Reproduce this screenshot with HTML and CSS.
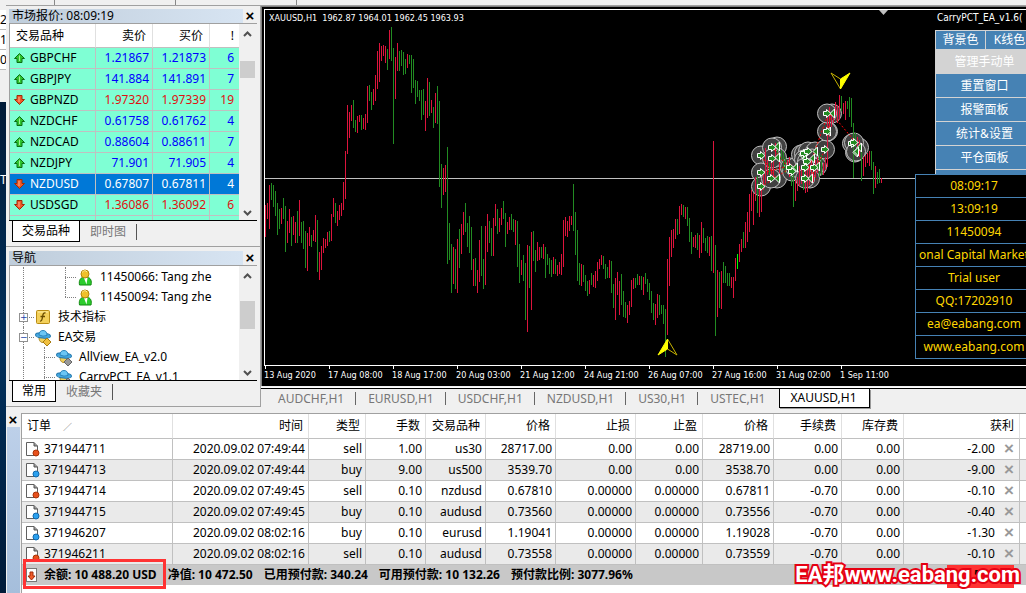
FILE: index.html
```html
<!DOCTYPE html>
<html lang="zh-CN">
<head>
<meta charset="utf-8">
<title>XAUUSD,H1</title>
<link rel="stylesheet" href="styles.css">
</head>
<body>
<svg class="defs" aria-hidden="true">
  <defs>
    <symbol id="up" viewBox="0 0 11 10"><path d="M5.5.5 10.5 5.5H8V9.5H3V5.5H.5Z" fill="#2fc52f" stroke="#0b6e12"/><path d="M5.5 2.5V8" stroke="#a4f09a"/></symbol>
    <symbol id="down" viewBox="0 0 11 10"><path d="M5.5 9.5 10.5 4.5H8V.5H3V4.5H.5Z" fill="#f05a28" stroke="#a02a08"/><path d="M5 2V7" stroke="#ffb090"/></symbol>
    <symbol id="doc" viewBox="0 0 15 16"><path d="M1.5 1.5H9L12.5 5V14.5H1.5Z" fill="#fff" stroke="#606060"/><path d="M9 1.5V5H12.5" fill="#999" stroke="#555"/></symbol>
    <symbol id="user" viewBox="0 0 17 17"><path d="M2.5 16C1.5 11 4 8.5 6 8.5H10.5C13.5 8.5 15 12 14 16Z" fill="#2ccc2c" stroke="#128a12"/><path d="M7 9 9.5 15.5 10.5 9Z" fill="#fff"/><circle cx="8" cy="5" r="4" fill="#f0c02c" stroke="#b5860c"/><path d="M5 3.5Q8 0 10 3" fill="none" stroke="#fff09a"/></symbol>
    <symbol id="func" viewBox="0 0 17 17"><rect x="1.5" y="1.5" width="13" height="13" rx="1" fill="#f3d05a" stroke="#b98c14"/><path d="M3 3H13" stroke="#fff0a8"/><path d="M10.5 4C8.5 3.500 8 5 7.5 8S6.5 12.5 5 12M5.5 7.5H10" fill="none" stroke="#6a4c00" stroke-width="1.3"/></symbol>
    <symbol id="hat" viewBox="0 0 17 17"><path d="M4 8H12C12 12 10.5 13.500 8 13.500S4 12 4 8Z" fill="#f3d05a" stroke="#a98420"/><ellipse cx="8" cy="6.5" rx="7.5" ry="2.6" fill="#45a8e0" stroke="#1f75ac" transform="rotate(6 8 6.5)"/><path d="M4 6C4 3 5.5 1.500 8 1.500S12 3 12 6.500Q8 8 4 6Z" fill="#6cc6f4" stroke="#2b86bd"/></symbol>
  </defs>
</svg>
<div class="desk">
  <aside class="edge"><div class="edge-rows"><span>2</span><span>1</span><span>0</span></div><div class="edge-dark">T</div></aside>
  <div class="app">
    <div class="toolbar"><i></i><i></i><i></i></div>
    <div class="workspace">
      <div class="dock">
        <section class="panel market">
          <header class="caption"><h2>市场报价: 08:09:19</h2><button class="close" aria-label="关闭">×</button></header>
          <div class="view">
            <table class="quotes">
              <colgroup><col class="q-sym"><col class="q-price"><col class="q-price"><col class="q-spread"></colgroup>
              <thead><tr><th>交易品种</th><th>卖价</th><th>买价</th><th>!</th></tr></thead>
              <tbody>
                <tr><td><svg><use href="#up"/></svg>GBPCHF</td><td>1.21867</td><td>1.21873</td><td>6</td></tr>
                <tr><td><svg><use href="#up"/></svg>GBPJPY</td><td>141.884</td><td>141.891</td><td>7</td></tr>
                <tr class="fall"><td><svg><use href="#down"/></svg>GBPNZD</td><td>1.97320</td><td>1.97339</td><td>19</td></tr>
                <tr><td><svg><use href="#up"/></svg>NZDCHF</td><td>0.61758</td><td>0.61762</td><td>4</td></tr>
                <tr><td><svg><use href="#up"/></svg>NZDCAD</td><td>0.88604</td><td>0.88611</td><td>7</td></tr>
                <tr><td><svg><use href="#up"/></svg>NZDJPY</td><td>71.901</td><td>71.905</td><td>4</td></tr>
                <tr class="selected"><td><svg><use href="#down"/></svg>NZDUSD</td><td>0.67807</td><td>0.67811</td><td>4</td></tr>
                <tr class="fall"><td><svg><use href="#down"/></svg>USDSGD</td><td>1.36086</td><td>1.36092</td><td>6</td></tr>
                <tr><td></td><td></td><td></td><td></td></tr>
              </tbody>
            </table>
            <div class="scroll"><svg viewBox="0 0 9 6"><path d="M1 5 4.5 1.5 8 5"/></svg><i class="thumb"></i><svg viewBox="0 0 9 6"><path d="M1 1 4.5 4.5 8 1"/></svg></div>
          </div>
          <nav class="tabs"><button class="active">交易品种</button><button>即时图</button></nav>
        </section>
        <section class="panel navigator">
          <header class="caption"><h2>导航</h2><button class="close" aria-label="关闭">×</button></header>
          <div class="view">
            <ul class="tree">
              <li><i class="v"></i><i></i><i class="v h"></i><svg><use href="#user"/></svg>11450066: Tang zhe</li>
              <li><i class="v"></i><i></i><i class="v h end"></i><svg><use href="#user"/></svg>11450094: Tang zhe</li>
              <li><i class="v h"><b>+</b></i><svg><use href="#func"/></svg>技术指标</li>
              <li><i class="v h"><b>−</b></i><svg><use href="#hat"/><path d="M12 9 16 13 12 17 8 13Z" fill="#f0c040" stroke="#a87c10"/></svg>EA交易</li>
              <li><i class="v"></i><i class="v h"></i><svg><use href="#hat"/><path d="M12 9 16 13 12 17 8 13Z" fill="#999" stroke="#666"/></svg>AllView_EA_v2.0</li>
              <li><i class="v"></i><i class="v h"></i><svg><use href="#hat"/><path d="M12 9 16 13 12 17 8 13Z" fill="#999" stroke="#666"/></svg>CarryPCT_EA_v1.1</li>
            </ul>
            <div class="scroll"><svg viewBox="0 0 9 6"><path d="M1 5 4.5 1.5 8 5"/></svg><i class="thumb"></i><svg viewBox="0 0 9 6"><path d="M1 1 4.5 4.5 8 1"/></svg></div>
          </div>
          <nav class="tabs"><button class="active">常用</button><button>收藏夹</button></nav>
        </section>
      </div>
      <main class="charts">
        <div class="chart">
          <div class="plot">
            <svg id="plot" class="canvas" role="img" aria-label="XAUUSD H1"></svg>
            <p class="ohlc">XAUUSD,H1&nbsp; 1962.87 1964.01 1962.45 1963.93</p>
            <div class="overlay">
              <p class="ea-name">CarryPCT_EA_v1.6(</p>
              <div class="buttons">
                <button>背景色</button><button>K线色</button>
                <button class="wide off">管理手动单</button>
                <button class="wide">重置窗口</button>
                <button class="wide">报警面板</button>
                <button class="wide">统计&amp;设置</button>
                <button class="wide">平仓面板</button>
                <span class="wide"></span>
              </div>
              <ul class="status"><li>08:09:17</li><li>13:09:19</li><li>11450094</li><li>onal Capital Market</li><li>Trial user</li><li>QQ:17202910</li><li>ea@eabang.com</li><li>www.eabang.com</li></ul>
            </div>
          </div>
          <ol class="axis"><li>13 Aug 2020</li><li>17 Aug 08:00</li><li>18 Aug 17:00</li><li>20 Aug 03:00</li><li>21 Aug 12:00</li><li>24 Aug 21:00</li><li>26 Aug 07:00</li><li>27 Aug 16:00</li><li>31 Aug 02:00</li><li>1 Sep 11:00</li></ol>
        </div>
        <nav class="chart-tabs"><button>AUDCHF,H1</button><button>EURUSD,H1</button><button>USDCHF,H1</button><button>NZDUSD,H1</button><button>US30,H1</button><button>USTEC,H1</button><button class="active">XAUUSD,H1</button></nav>
      </main>
    </div>
    <section class="terminal">
      <div class="grip"><button class="close" aria-label="关闭">×</button><div></div></div>
      <div class="orders-wrap">
        <table class="orders">
          <colgroup><col class="c-order"><col class="c-time"><col class="c-type"><col class="c-lots"><col class="c-sym"><col class="c-price"><col class="c-sl"><col class="c-tp"><col class="c-now"><col class="c-fee"><col class="c-swap"><col class="c-profit"><col></colgroup>
          <thead><tr><th>订单<span class="sort">∕</span></th><th>时间</th><th>类型</th><th>手数</th><th>交易品种</th><th>价格</th><th>止损</th><th>止盈</th><th>价格</th><th>手续费</th><th>库存费</th><th>获利</th><th></th></tr></thead>
          <tbody>
            <tr><td><svg><use href="#doc"/><circle class="sell" cx="11" cy="12" r="3"/></svg>371944711</td><td>2020.09.02 07:49:44</td><td>sell</td><td>1.00</td><td>us30</td><td>28717.00</td><td>0.00</td><td>0.00</td><td>28719.00</td><td>0.00</td><td>0.00</td><td>-2.00<button class="x" aria-label="平仓">×</button></td><td></td></tr>
            <tr><td><svg><use href="#doc"/><circle class="buy" cx="11" cy="12" r="3"/></svg>371944713</td><td>2020.09.02 07:49:44</td><td>buy</td><td>9.00</td><td>us500</td><td>3539.70</td><td>0.00</td><td>0.00</td><td>3538.70</td><td>0.00</td><td>0.00</td><td>-9.00<button class="x" aria-label="平仓">×</button></td><td></td></tr>
            <tr><td><svg><use href="#doc"/><circle class="sell" cx="11" cy="12" r="3"/></svg>371944714</td><td>2020.09.02 07:49:45</td><td>sell</td><td>0.10</td><td>nzdusd</td><td>0.67810</td><td>0.00000</td><td>0.00000</td><td>0.67811</td><td>-0.70</td><td>0.00</td><td>-0.10<button class="x" aria-label="平仓">×</button></td><td></td></tr>
            <tr><td><svg><use href="#doc"/><circle class="buy" cx="11" cy="12" r="3"/></svg>371944715</td><td>2020.09.02 07:49:45</td><td>buy</td><td>0.10</td><td>audusd</td><td>0.73560</td><td>0.00000</td><td>0.00000</td><td>0.73556</td><td>-0.70</td><td>0.00</td><td>-0.40<button class="x" aria-label="平仓">×</button></td><td></td></tr>
            <tr><td><svg><use href="#doc"/><circle class="buy" cx="11" cy="12" r="3"/></svg>371946207</td><td>2020.09.02 08:02:16</td><td>buy</td><td>0.10</td><td>eurusd</td><td>1.19041</td><td>0.00000</td><td>0.00000</td><td>1.19028</td><td>-0.70</td><td>0.00</td><td>-1.30<button class="x" aria-label="平仓">×</button></td><td></td></tr>
            <tr><td><svg><use href="#doc"/><circle class="sell" cx="11" cy="12" r="3"/></svg>371946211</td><td>2020.09.02 08:02:16</td><td>sell</td><td>0.10</td><td>audusd</td><td>0.73558</td><td>0.00000</td><td>0.00000</td><td>0.73559</td><td>-0.70</td><td>0.00</td><td>-0.10<button class="x" aria-label="平仓">×</button></td><td></td></tr>
          </tbody>
        </table>
        <div class="summary">
          <svg viewBox="0 0 12 15"><rect x=".5" y=".5" width="10" height="13" fill="#fff" stroke="#777"/><path d="M5.5 12 9 8H7V4H4V8H2Z" fill="#f05a28" stroke="#a02a08"/></svg>
          <span>余额: 10 488.20 USD</span><span>净值: 10 472.50</span><span>已用预付款: 340.24</span><span>可用预付款: 10 132.26</span><span>预付款比例: 3077.96%</span>
          <i class="mark"></i>
          <div class="total">5</div>
          <div class="watermark">EA邦www.eabang.com</div>
        </div>
      </div>
    </section>
  </div>
</div>
<script src="chart.js"></script>
</body>
</html>
```
FILE: styles.css
```css
* { box-sizing: border-box; }
body {
  margin: 0;
  background: #f0f0f0;
  color: #000;
  font: 12px/20px "Noto Sans", "Noto Sans CJK SC", sans-serif;
  overflow: hidden;
}
h2, p, ul, ol { margin: 0; padding: 0; }
ul, ol { list-style: none; }
button { margin: 0; padding: 0; border: 0; background: none; color: inherit; font: inherit; white-space: nowrap; }
table { border-collapse: separate; border-spacing: 0; table-layout: fixed; }
th { font-weight: normal; }
.defs { position: absolute; width: 0; height: 0; }

.desk { display: flex; min-height: 100vh; }
.edge { width: 6px; flex: none; display: flex; flex-direction: column; overflow: hidden; }
.edge-rows { height: 102px; padding-top: 10px; background: #f0f0f0; }
.edge-rows span { display: block; height: 20px; background: #fff; border-bottom: 1px solid #bbb; }
.edge-dark { flex: 1; padding-top: 68px; background: linear-gradient(#001a38, #00305c 50%, #001a38); color: #fff; }
.app { flex: 1; min-width: 0; display: flex; flex-direction: column; }

.toolbar { height: 6px; padding-left: 48px; display: flex; gap: 120px; border-bottom: 1px solid #a0a0a0; }
.toolbar i { width: 1px; background: #888; }
.workspace { display: flex; }
.dock { width: 255px; flex: none; }
.panel { padding: 2px 3px 3px; border-right: 1px solid #a0a0a0; border-bottom: 1px solid #a0a0a0; }
.caption { display: flex; align-items: center; height: 15px; }
.caption h2 { flex: 1; padding-left: 3px; background: linear-gradient(90deg, #bfcddb, #d7e4f2); font-size: 12px; font-weight: normal; line-height: 14px; }
.close { width: 14px; font: bold 15px/14px "Liberation Sans", sans-serif; }
.view { display: flex; border: 1px solid #a0a0a0; border-width: 1px 0 0 1px; background: #fff; overflow: hidden; }
.market .view { height: 197px; }
.navigator { padding-top: 3px; }
.navigator .view { height: 115px; }

.quotes { flex: 1; width: 229px; }
.q-sym { width: 86px; }
.q-price { width: 57px; }
.quotes th { height: 24px; padding: 0 6px; border-right: 1px solid #e0e0e0; border-bottom: 1px solid #c0c0c0; text-align: right; line-height: 22px; }
.quotes th:first-child { text-align: left; }
.quotes td { height: 21px; padding: 0 3px; border-right: 1px solid #c0c0c0; border-bottom: 1px solid #c0c0c0; background: #7fffd4; color: #00f; text-align: right; line-height: 20px; }
.quotes td:first-child { padding-left: 4px; color: #000; text-align: left; }
.quotes td:last-child, .quotes th:last-child { border-right: 0; padding-right: 5px; }
.quotes .fall td:not(:first-child) { color: #e01010; }
.quotes .selected td, .quotes .selected td:first-child { background: #0078d7; color: #fff; }
.quotes svg { width: 11px; height: 10px; margin-right: 5px; vertical-align: -1px; }

.scroll { width: 18px; margin-left: auto; padding: 7px 2px 4px 0; display: flex; flex-direction: column; align-items: center; background: #f0f0f0; }
.scroll svg { width: 9px; height: 6px; fill: none; stroke: #505050; stroke-width: 2; }
.thumb { width: 15px; height: 17px; margin: 24px 0 auto; background: #cdcdcd; }
.navigator .thumb { height: 28px; margin-top: 22px; }

.tabs { display: flex; padding-left: 3px; border-top: 1px solid #000; }
.tabs button { height: 21px; margin: 0 0 1px; padding: 0 10px; color: #777; line-height: 20px; }
.tabs .active { border: solid #000; border-width: 0 1px 1px; background: #fff; color: #000; padding: 0 9px; }
.tabs button:last-child { height: 16px; margin-top: 3px; line-height: 14px; border-right: 1px solid #555; }

.tree { flex: 1; padding-top: 1px; white-space: nowrap; }
.tree li { display: flex; align-items: center; height: 20px; }
.tree i { position: relative; width: 21px; height: 20px; flex: none; }
.tree .v::before { content: ""; position: absolute; left: 13px; top: 0; bottom: 0; border-left: 1px dotted #808080; }
.tree .end::before { bottom: 10px; }
.tree .h::after { content: ""; position: absolute; left: 13px; top: 10px; width: 11px; border-top: 1px dotted #808080; }
.tree b { position: absolute; z-index: 1; left: 9px; top: 6px; width: 9px; height: 9px; border: 1px solid #919191; background: #fff; color: #1c3fa8; font: 9px/7px "DejaVu Sans", sans-serif; text-align: center; }
.tree svg { width: 17px; height: 17px; margin: 0 6px 0 4px; flex: none; }

.charts { flex: 1; min-width: 0; display: flex; flex-direction: column; }
.chart { background: #000; border-top: 1px solid #808080; border-left: 1px solid #808080; color: #fff; font: 9px/12px "DejaVu Sans Condensed", "DejaVu Sans", sans-serif; overflow: hidden; }
.plot { position: relative; height: 357px; margin: 2px 0 0 2px; border: solid #fff; border-width: 1px 0 1px 1px; }
.canvas { display: block; width: 100%; height: 100%; }
.ohlc { position: absolute; left: 4px; top: 2px; white-space: nowrap; }
.overlay { position: absolute; top: 2px; right: -7px; width: 118px; }
.ea-name { padding-left: 22px; font-size: 10px; }
.buttons { display: grid; grid-template-columns: 49px 1fr; gap: 1px; margin: 6px 0 0 20px; padding: 1px 0 0 1px; background: #d3d3d3; color: #fff; font: 12px/18px "Noto Sans", "Noto Sans CJK SC", sans-serif; }
.buttons button, .buttons span { height: 18px; background: #4682b4; }
.buttons .wide { grid-column: 1 / 3; height: 23px; line-height: 23px; }
.buttons .off { background: #d3d3d3; }
.buttons span.wide { height: 4px; }
.status { position: relative; border: 1px solid #4682b4; border-bottom: 0; background: #000; color: #ffd700; font: 12px/22px "Noto Sans", sans-serif; text-align: center; }
.status li { height: 23px; border-bottom: 1px solid #4682b4; white-space: nowrap; overflow: hidden; }
.axis { display: flex; height: 20px; padding-left: 2px; }
.axis li { position: relative; width: 64px; flex: none; padding-top: 3px; white-space: nowrap; }
.axis li::before { content: ""; position: absolute; left: 1px; top: 0; height: 3px; border-left: 1px solid #fff; }
.chart-tabs { flex: 1; display: flex; margin-top: 2px; padding-left: 7px; border-top: 1px solid #000; box-shadow: 0 -1px #fff; background: #f0f0f0; color: #777; }
.chart-tabs button { position: relative; height: 19px; padding: 0 14px 0 10px; line-height: 18px; }
.chart-tabs button:not(.active)::after { content: ""; position: absolute; right: 2px; top: 3px; height: 13px; border-right: 1px solid #666; }
.chart-tabs button:nth-child(6)::after { display: none; }
.chart-tabs .active { padding: 0 12px 0 10px; border: solid #000; border-width: 0 1px 1px; box-shadow: 1px 1px #999; background: #fff; color: #000; }

.canvas .bar { fill: #dc143c; }
.canvas .bar.g { fill: #228b22; }
.canvas .bar.l { fill: #00ff00; }
.canvas .level { fill: #c0c0c0; }
.canvas .deal circle { fill: #404040; stroke: #c0c0c0; }
.canvas .arrow { fill: #228b22; stroke: #fff; }
.canvas .route { fill: none; stroke: #f00; stroke-dasharray: 2 2; }
.canvas .fill { fill: #ff0; stroke: #ff0; }
.canvas .hollow { fill: #000; stroke: #c8b400; }

.terminal { flex: 1; display: flex; padding-top: 5px; }
.grip { width: 15px; flex: none; display: flex; flex-direction: column; }
.grip div { flex: 1; margin: 0 1px; background: linear-gradient(#bdd0e9, #a5bedb); }
.orders-wrap { flex: 1; min-width: 0; background: #fff; border-top: 1px solid #a0a0a0; border-left: 1px solid #a0a0a0; }
.orders { width: 100%; }
.c-order { width: 151px; }
.c-time { width: 136px; }
.c-type { width: 57px; }
.c-lots, .c-sym { width: 60px; }
.c-price { width: 70px; }
.c-sl { width: 80px; }
.c-tp { width: 67px; }
.c-now { width: 71px; }
.c-fee { width: 68px; }
.c-swap { width: 62px; }
.c-profit { width: 116px; }
.orders th { height: 25px; padding: 0 5px; border-right: 1px solid #e0e0e0; border-bottom: 1px solid #c0c0c0; text-align: right; white-space: nowrap; }
.orders th:first-child { text-align: left; }
.sort { margin-left: 12px; font-size: 9px; color: #777; }
.orders td { height: 21px; padding: 0 3px 0 0; border-right: 1px solid #c0c0c0; border-bottom: 1px solid #c0c0c0; text-align: right; line-height: 20px; white-space: nowrap; }
.orders tr > :last-child { border-right: 0; padding: 0; }
.orders td:first-child { padding-left: 3px; text-align: left; }
.orders tr:nth-child(even) td { background: #eaeaea; }
.orders svg { width: 15px; height: 16px; margin-right: 4px; vertical-align: -4px; }
.sell { fill: #e8501c; stroke: #a83408; }
.buy { fill: #2ba0ee; stroke: #1068ac; }
.x { width: 12px; height: 20px; margin: 0 1px 0 8px; color: #999; font: bold 17px/20px "Liberation Sans", sans-serif; vertical-align: top; }
.summary { position: relative; display: flex; align-items: center; gap: 11px; height: 20px; padding-left: 4px; background: #c8c8c8; font-weight: bold; white-space: nowrap; }
.summary > svg { width: 12px; height: 15px; margin-right: -5px; }
.mark { position: absolute; left: 1px; top: -6px; width: 143px; height: 30px; border: 3px solid #ff3333; }
.total { position: absolute; right: 12px; top: 0; width: 67px; height: 23px; padding-left: 27px; background: #ff3333; }
.watermark { position: absolute; right: 6px; top: -5px; color: #fff; font: bold 22px/30px "Liberation Sans Narrow", "Roboto", "Noto Sans CJK SC", sans-serif; -webkit-text-stroke: 4px #e60012; paint-order: stroke fill; }
```
FILE: chart.js
```js
// Bars run at a 2px pitch. Each block holds high-low pairs in thirds of a pixel,
// measured from the block's own base; r = up, g = down, l = highlighted.
const blocks = [
  { start: 0, base: 0, bars: `r615-710 r610-656 r555-686 g549-600 g555-620 g573-648 g609-704 g627-686 r624-672 g594-656
    g618-755 r663-728 r627-698 g651-737 r648-705 r666-728 g633-728 r600-708 g666-728 g663-747 g693-804 r699-812 r681-738
    g705-740 r690-722 r645-725 g660-815 r756-840 r738-810 r714-758 r717-743 r696-737 g693-725 r642-722 r594-651 g609-669
    r633-678 r615-660 r609-648 r546-630 r453-597 r315-462 r336-414 r315-363 g300-384 g360-396 r348-399 r345-366 g345-390
    r354-387 r342-390 r258-369 g255-303 g276-330 r267-315 r225-303 r153-267 r129-246 r138-183 r135-168 r138-189 g147-210
    r90-177 g81-183 g144-432 r171-297 r129-213 g153-213 g150-198 g156-225 g177-222 r162-204 g165-192 g165-279 g177-264
    g240-312 g243-291 g270-303 g270-360 g267-345 r303-393 r234-354 g246-348 r300-339 g321-384 r279-369 g258-372 g303-561
    g492-624 r504-585 r495-576 g441-791 g669-780 g732-879 r741-852 g747-867 r717-879 g687-804 r672-762 r636-705 g609-696
    g669-741 g648-759 g681-810 r777-858 g774-858 r810-879 r720-846 g678-828 g777-867 r678-855 r642-756 g663-729 g684-768
    r654-768 r612-678 g627-702 r654-696 r624-675 g603-657 g639-741 r666-702 r651-690 g642-690 g657-696 r660-735 g663-801` },
  { start: 127, base: 180, bars: `g552-669 r600-645 g585-663 g609-780 r555-815 g558-684 r516-750 g513-603 g570-636 r546-603
    r561-600 g561-594 r552-597 g561-654 g582-615 g594-642 g600-651 r591-642 g597-642 r615-648 r606-642 r582-645 r480-621
    r471-528 r483-531 r468-513 r468-495 g372-513 g456-585 g510-663 g609-675 r612-678 g615-666 g645-693 g663-708 r660-702
    g639-675 r645-681 r633-684 r606-663 r597-627 r585-615 g588-627 g612-657 g621-654 r600-654 g603-699 g672-745 r654-780
    r636-705 r663-765 g642-735 g693-770 g725-775 r735-790 r722-765 r660-740 r654-687 g654-684 g642-675 r648-675 g648-690
    r651-705 g639-672 g657-696 g669-720 g693-759 g729-780 r732-795 r702-774 g705-765 g735-762 g735-792 g747-891 r597-825
    r531-678 r510-591 r507-564 r477-537 g477-525 r438-522 r432-465 g435-471 r441-477 g441-498 g474-546 g516-582 r531-561
    r525-564 g519-570 r525-594 r486-579 g504-549 g534-573 g528-579 r531-588 g528-633 r243-639 g555-828 r630-771 g636-744
    r633-747 g606-669 g618-669 g639-678 g639-678 r651-684 r651-714 r594-663 l582-627 r552-606 r537-576 g516-564 r486-564
    r456-546 r402-516 r390-453 r399-495 r351-423 g348-459 r387-471 r390-456 r335-390 r265-370 r300-345 g310-345 r300-350
    r290-360 r250-300 g245-300 r280-340 g270-300 g275-330 g290-340 r300-330 r290-350 g330-378 g330-440 r360-423 r350-393
    r318-378 r320-372 g310-390 r330-400 r330-395 r320-375 r300-370 r310-365 r300-350 r290-340 g280-350 g285-345 r310-345
    r292-330 r150-320 r140-230 r160-200 r150-190 r126-165 r135-190 r105-180 g108-153 r129-163 r123-180 g123-146 g111-170
    g114-200 g188-354 g220-260 r230-275 r240-290 g270-362 r290-348 r285-320 r279-310 r273-318 g273-330 g306-402 r318-384
    g336-372 g326-370 r354-369` }
];

// Deal markers: centre x, centre y, and 1 for an entry or 0 for an exit.
const deals = [[496,146,1],[496,163,1],[496,177,1],[512,169,0],[506,169,1],[512,137,0],[507,138,1],[512,148,0],[507,149,1],
  [525,158,1],[527,162,1],[530,158,0],[536,145,0],[539,144,1],[543,142,1],[550,142,0],[539,150,0],[542,152,1],[547,149,0],
  [552,157,0],[549,158,1],[540,158,1],[545,169,0],[540,169,1],[560,140,1],[563,122,0],[562,122,1],[567,104,0],[562,104,1],
  [590,143,0],[587,134,1],[594,138,0],[589,133,1],[591,142,0]];

const plotTop = 10;
let out = '<rect class="level" x="0" y="168" width="100%" height="1"/>';
out += '<g class="deal">' + deals.map(([x, y]) => `<circle cx="${x}" cy="${y - 0.5}" r="9.5"/>`).join('') + '</g>';
for (const { start, base, bars } of blocks) {
  bars.trim().split(/\s+/).forEach((bar, i) => {
    const [hi, lo] = bar.slice(1).split('-').map(v => Math.round((+v + base) / 3));
    out += `<rect class="bar ${bar[0]}" x="${(start + i) * 2}" y="${hi - plotTop}" width="1" height="${lo - hi}"/>`;
  });
}
out += '<path class="route" d="M496 146 512 169M498 163 527 155M507 137 527 162M538 145 552 170M543 160 563 104M563 122 566 103 592 134M560 140 545 169M496 177 530 155"/>';
for (const [x, y, entry] of deals) {
  const cy = y - 0.5;
  out += entry
    ? `<path class="arrow" d="M${x - 3.5} ${cy - 2}H${x - 0.5}V${cy - 4}L${x + 4} ${cy}L${x - 0.5} ${cy + 4}V${cy + 2}H${x - 3.5}Z"/>`
    : `<path class="arrow" d="M${x + 2.5} ${cy - 4.5}V${cy + 4.5}L${x - 2} ${cy}Z"/>`;
}
out += '<path class="hollow" d="M566 63 575.5 79V69Z"/><path class="fill" d="M585 63 575.5 79V69Z"/>';
out += '<path class="hollow" d="M412 345 402.5 329V339Z"/><path class="fill" d="M393 345 402.5 329V339Z"/>';
out += '<path class="level" d="M614 0H623L618.5 5Z"/>';
document.getElementById('plot').innerHTML = out;
```
